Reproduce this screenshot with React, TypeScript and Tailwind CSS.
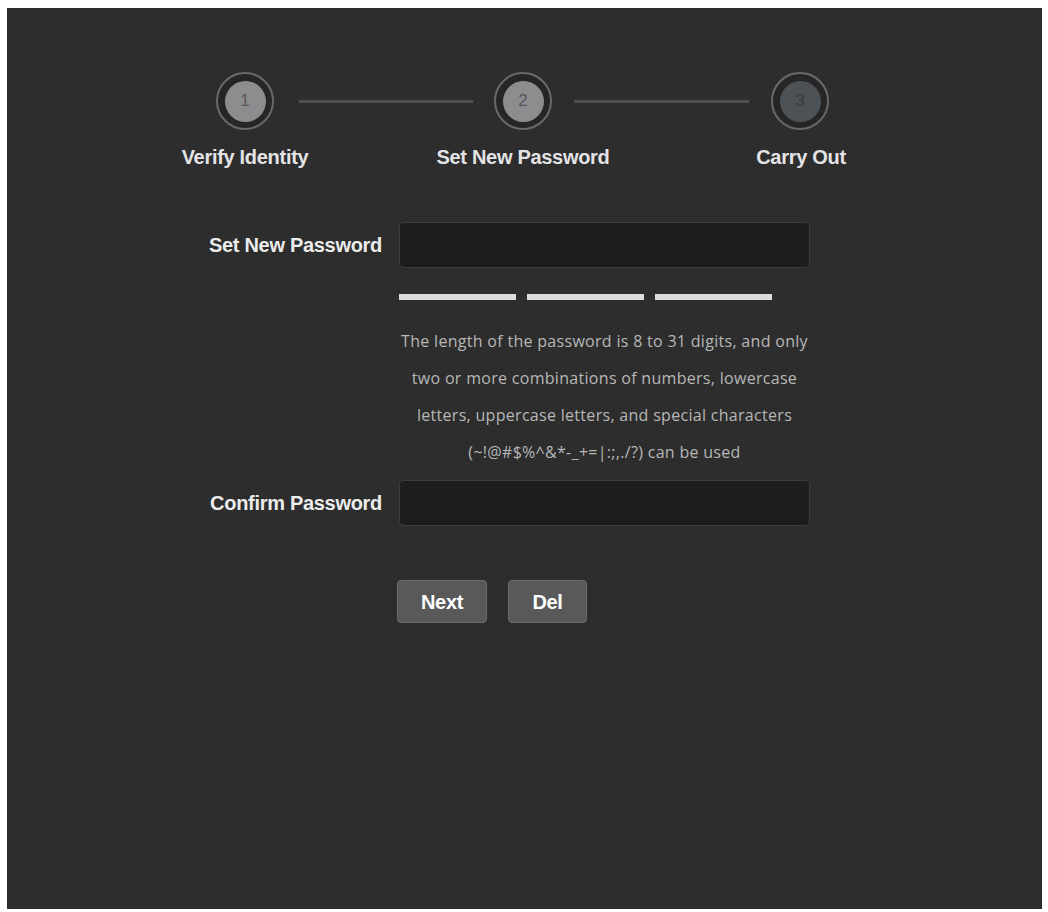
const steps = [
  { n: "1", label: "Verify Identity", fill: "bg-[#8d8d8f]", num: "text-[#58585a]" },
  { n: "2", label: "Set New Password", fill: "bg-[#8d8d8f]", num: "text-[#58585a]" },
  { n: "3", label: "Carry Out", fill: "bg-[#4d5257]", num: "text-[#353a40]" },
];

const StepCircle = ({ n, fill, num }: { n: string; fill: string; num: string }) => (
  <div className="flex h-[58px] w-[58px] shrink-0 items-center justify-center rounded-full border-2 border-[#69696b] bg-[#262626]">
    <div className={`flex h-[41px] w-[41px] items-center justify-center rounded-full ${fill}`}>
      <span className={`text-[17px] ${num}`}>{n}</span>
    </div>
  </div>
);

const Field = ({ label }: { label: string }) => (
  <div className="flex items-center">
    <label className="w-[190px] pr-[1px] text-right text-[20px] font-bold tracking-[-0.3px] text-[#ececec]">
      {label}
    </label>
    <input
      type="password"
      className="ml-[16px] h-[46px] w-[411px] rounded-[4px] border border-[#3c3c3c] bg-[#1d1d1d] px-3 text-white outline-none"
    />
  </div>
);

export default function App() {
  return (
    <div className="min-h-[912px] bg-white pl-[7px] pt-[8px] font-['Liberation_Sans',Arial,sans-serif]">
      <div className="h-[901px] w-[1035px] bg-[#2d2d2d] pt-[64px]">
        {/* stepper */}
        <div className="ml-[209px] flex items-center">
          <StepCircle {...steps[0]} />
          <div className="ml-[25px] h-[3px] w-[174px] bg-[#4f4f4f]" />
          <div className="ml-[21px]">
            <StepCircle {...steps[1]} />
          </div>
          <div className="ml-[22px] h-[3px] w-[175px] bg-[#4f4f4f]" />
          <div className="ml-[22px]">
            <StepCircle {...steps[2]} />
          </div>
        </div>
        <div className="ml-[99px] mt-[15px] flex">
          {steps.map((s) => (
            <div
              key={s.n}
              className="w-[278px] text-center text-[20px] font-bold leading-[24px] tracking-[-0.3px] text-[#e4e4e6]"
            >
              {s.label}
            </div>
          ))}
        </div>

        {/* form */}
        <div className="ml-[186px] mt-[53px] flex flex-col">
          <Field label="Set New Password" />
          <div className="ml-[206px] mt-[26px] flex gap-[11px]">
            <div className="h-[6px] w-[117px] bg-[#dcdcdc]" />
            <div className="h-[6px] w-[117px] bg-[#dcdcdc]" />
            <div className="h-[6px] w-[117px] bg-[#dcdcdc]" />
          </div>
          <p className="ml-[176px] mt-[23px] w-[471px] whitespace-nowrap text-center font-['Open_Sans',sans-serif] text-[16px] leading-[37px] tracking-[0.3px] text-[#b7b7b7]">
            The length of the password is 8 to 31 digits, and only
            <br />
            two or more combinations of numbers, lowercase
            <br />
            letters, uppercase letters, and special characters
            <br />
            (~!@#$%^&amp;*-_+=|:;,./?) can be used
          </p>
          <div className="mt-[9px]">
            <Field label="Confirm Password" />
          </div>
          <div className="ml-[204px] mt-[54px] flex gap-[21px]">
            <button className="h-[43px] w-[90px] rounded-[4px] border border-[#6c6c6c] bg-[#595959] text-[20px] font-bold tracking-[-0.3px] text-white">
              Next
            </button>
            <button className="h-[43px] w-[79px] rounded-[4px] border border-[#6c6c6c] bg-[#595959] text-[20px] font-bold tracking-[-0.3px] text-white">
              Del
            </button>
          </div>
        </div>
      </div>
    </div>
  );
}
